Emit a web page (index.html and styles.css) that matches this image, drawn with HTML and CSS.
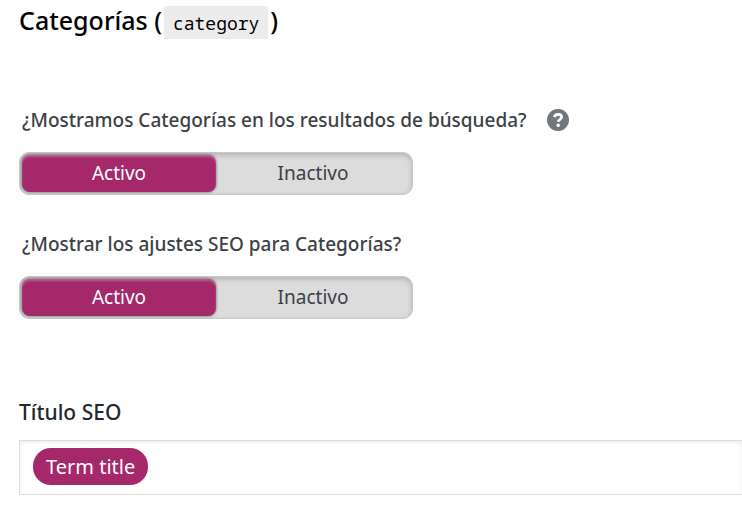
FILE: index.html
```html
<!DOCTYPE html>
<html lang="es">
<head>
  <meta charset="UTF-8">
  <title>Categorías</title>
  <meta name="viewport" content="width=device-width, initial-scale=1.0">
  <link rel="stylesheet" href="styles.css">
</head>
<body>

  <main class="settings">
    <h2>Categorías (<code>category</code>)</h2>

    <form>
      <fieldset class="toggle">
        <legend>
          ¿Mostramos Categorías en los resultados de búsqueda?
          <button type="button" class="help" aria-label="Ayuda">
            <svg viewBox="0 0 22 22" width="22" height="22" aria-hidden="true">
              <circle cx="11" cy="11" r="11" fill="#72777c"/>
              <path d="M7.4 8.3C7.7 6.2 9.2 5.4 11.2 5.4c2.1 0 3.4 1 3.4 2.7 0 2.3-3.3 2.3-3.3 4.7" fill="none" stroke="#fff" stroke-width="2.8"/>
              <circle cx="11.2" cy="16.2" r="1.7" fill="#fff"/>
            </svg>
          </button>
        </legend>
        <div class="switch">
          <input type="radio" name="show_results" id="results_on" checked>
          <label for="results_on">Activo</label>
          <input type="radio" name="show_results" id="results_off">
          <label for="results_off">Inactivo</label>
        </div>
      </fieldset>

      <fieldset class="toggle">
        <legend>¿Mostrar los ajustes SEO para Categorías?</legend>
        <div class="switch">
          <input type="radio" name="show_metabox" id="metabox_on" checked>
          <label for="metabox_on">Activo</label>
          <input type="radio" name="show_metabox" id="metabox_off">
          <label for="metabox_off">Inactivo</label>
        </div>
      </fieldset>

      <div class="field">
        <div class="field-label" id="title_label">Título SEO</div>
        <div class="editor" role="textbox" contenteditable="true" aria-labelledby="title_label"><span class="tag" contenteditable="false">Term title</span></div>
      </div>
    </form>
  </main>

</body>
</html>
```
FILE: styles.css
```css
* {
  box-sizing: border-box;
}

body {
  margin: 0;
  background: #fff;
  color: #3c4146;
  font-family: "Segoe UI", "Noto Sans", sans-serif;
  font-size: 19px;
  line-height: 28px;
}

.settings {
  padding: 2px 0 22px 19px;
}

h2 {
  margin: 0 0 65px;
  color: #000;
  font-size: 25px;
  font-weight: 500;
  line-height: 36px;
}

code {
  margin: 0 2px;
  padding: 5px 9px 4px;
  background: #ececec;
  font-family: Consolas, "Noto Sans Mono", "DejaVu Sans Mono", monospace;
  font-size: 18px;
  font-weight: 400;
}

.toggle {
  margin: 0 0 35px;
  padding: 0;
  border: 0;
  min-width: 0;
}

.toggle + .toggle {
  margin-bottom: 79px;
}

legend {
  display: flex;
  align-items: center;
  gap: 20px;
  padding: 0 3px;
  margin-bottom: 18px;
  font-weight: 500;
}

.help {
  display: flex;
  padding: 0;
  border: 0;
  background: none;
  cursor: pointer;
}

.switch {
  display: grid;
  grid-template-columns: 1fr 1fr;
  width: 100%;
  max-width: 394px;
  padding: 2px;
  border: 1px solid #c8c8c8;
  border-radius: 10px;
  background: #dcdcdc;
  box-shadow: inset 0 2px 5px rgba(0, 0, 0, 0.2);
}

.switch input {
  position: absolute;
  opacity: 0;
}

.switch label {
  padding: 4px;
  border-radius: 8px;
  line-height: 29px;
  text-align: center;
  cursor: pointer;
}

.switch input:checked + label {
  background: #a4286a;
  color: #fff;
  box-shadow: inset 0 2px 2px rgba(255, 255, 255, 0.25), 0 0 3px rgba(0, 0, 0, 0.6);
}

.field-label {
  margin-bottom: 14px;
  color: #23282d;
  font-size: 21px;
  font-weight: 500;
}

.editor {
  padding: 7px 13px 9px;
  border: 1px solid #ddd;
  border-right: 0;
  box-shadow: inset 0 2px 4px rgba(0, 0, 0, 0.07);
}

.tag {
  display: inline-block;
  padding: 4px 13px;
  border-radius: 18px;
  background: #a4286a;
  color: #fff;
  font-size: 20px;
  line-height: 29px;
  vertical-align: top;
}
```
